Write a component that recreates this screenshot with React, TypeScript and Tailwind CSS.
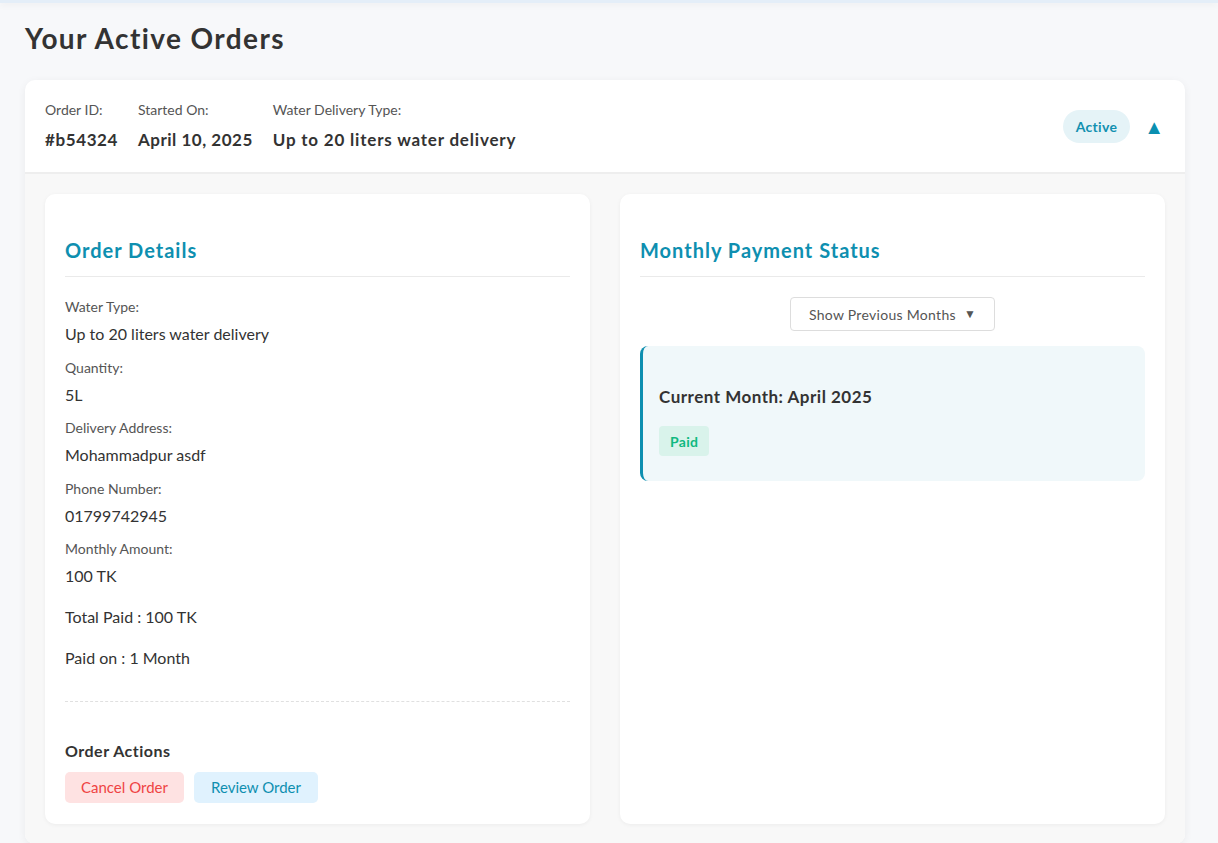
const detailRows = [
    { label: "Water Type:", value: "Up to 20 liters water delivery" },
    { label: "Quantity:", value: "5L" },
    { label: "Delivery Address:", value: "Mohammadpur asdf" },
    { label: "Phone Number:", value: "01799742945" },
    { label: "Monthly Amount:", value: "100 TK" },
];

const App = () => {
    return (
        <div className="min-h-[843px] bg-[#f7f8fa] font-['Lato',_'Noto_Sans',_sans-serif] text-[#333]">
            <div className="h-[3px] bg-[#e4eef8] shadow-[0_2px_6px_rgba(0,0,0,0.06)]" />
            <div className="pl-[25px] pr-[33px]">
                <h1 className="pt-[17px] text-[28px] font-bold leading-[36px] tracking-[1.4px] text-[#333]">Your Active Orders</h1>

                <div className="mt-[24px] overflow-hidden rounded-[10px] bg-white shadow-[0_2px_8px_rgba(0,0,0,0.06)]">
                    {/* order header */}
                    <div className="flex h-[94px] items-center justify-between border-b-2 border-[#eeeeee] px-5">
                        <div className="flex gap-5">
                            <div className="flex flex-col gap-[8px]">
                                <span className="text-[14px] leading-5 text-[#555]">Order ID:</span>
                                <span className="text-[17px] font-bold leading-6 tracking-[0.6px] text-[#333]">#b54324</span>
                            </div>
                            <div className="flex flex-col gap-[8px]">
                                <span className="text-[14px] leading-5 text-[#555]">Started On:</span>
                                <span className="text-[17px] font-bold leading-6 tracking-[0.5px] text-[#333]">April 10, 2025</span>
                            </div>
                            <div className="flex flex-col gap-[8px]">
                                <span className="text-[14px] leading-5 text-[#555]">Water Delivery Type:</span>
                                <span className="text-[17px] font-bold leading-6 tracking-[0.8px] text-[#333]">Up to 20 liters water delivery</span>
                            </div>
                        </div>
                        <div className="flex items-center gap-[14px] pr-[1px]">
                            <span className="flex h-[33px] items-center rounded-full bg-[#e5f3f7] px-[13px] text-[14px] font-bold tracking-[0.3px] text-[#1190b0]">Active</span>
                            <span className="text-[20px] leading-none text-[#0a8fb0]">▲</span>
                        </div>
                    </div>

                    {/* order body */}
                    <div className="grid grid-cols-2 gap-[30px] bg-[#f8f8f8] p-5">
                        <div className="rounded-[10px] bg-white px-5 pt-[42px] pb-[21px] shadow-[0_1px_4px_rgba(0,0,0,0.05)]">
                            <h3 className="border-b border-[#eaeaea] pb-[12px] text-[20px] font-bold leading-7 tracking-[1px] text-[#0e8fb0]">Order Details</h3>
                            <div className="mt-[20px] flex flex-col gap-[12.5px]">
                                {detailRows.map((row) => (
                                    <div key={row.label} className="flex flex-col gap-[6px]">
                                        <span className="text-[14px] leading-5 text-[#555]">{row.label}</span>
                                        <span className="text-[16px] leading-[22px] text-[#333]">{row.value}</span>
                                    </div>
                                ))}
                            </div>
                            <p className="mt-[19px] text-[16px] leading-[22px]">Total Paid : 100 TK</p>
                            <p className="mt-[19px] text-[16px] leading-[22px]">Paid on : 1 Month</p>
                            <div className="mt-[32px] border-t border-dashed border-[#e0e0e0]" />
                            <h4 className="mt-[37px] text-[16px] font-bold leading-6 tracking-[0.5px]">Order Actions</h4>
                            <div className="mt-[9px] flex gap-[10px]">
                                <button className="h-[31px] rounded-[5px] bg-[#fee2e2] px-4 text-[15px] text-[#ef4444]">Cancel Order</button>
                                <button className="h-[31px] rounded-[5px] bg-[#e0f2fe] px-[17px] text-[15px] text-[#0e8fb0]">Review Order</button>
                            </div>
                        </div>

                        <div className="rounded-[10px] bg-white px-5 pt-[42px] pb-5 shadow-[0_1px_4px_rgba(0,0,0,0.05)]">
                            <h3 className="border-b border-[#eaeaea] pb-[12px] text-[20px] font-bold leading-7 tracking-[1px] text-[#0e8fb0]">Monthly Payment Status</h3>
                            <div className="mt-[20px] flex justify-center">
                                <button className="flex h-[34px] items-center gap-2 rounded-[4px] border border-[#dddddd] bg-white px-[18px] text-[14px] tracking-[0.3px] text-[#555]">
                                    Show Previous Months
                                    <span className="text-[12px] text-[#555]">▼</span>
                                </button>
                            </div>
                            <div className="mt-[15px] h-[135px] rounded-[8px] border-l-[3px] border-[#0e8fb0] bg-[#f0f8fa] px-4 pt-[39px]">
                                <p className="text-[17px] font-bold leading-6 tracking-[0.5px] text-[#333]">Current Month: April 2025</p>
                                <span className="mt-[17px] inline-flex h-[30px] items-center rounded-[4px] bg-[#d9f3eb] px-[11px] text-[14px] font-bold tracking-[0.3px] text-[#10b981]">Paid</span>
                            </div>
                        </div>
                    </div>
                </div>
            </div>
        </div>
    );
};

export default App;
